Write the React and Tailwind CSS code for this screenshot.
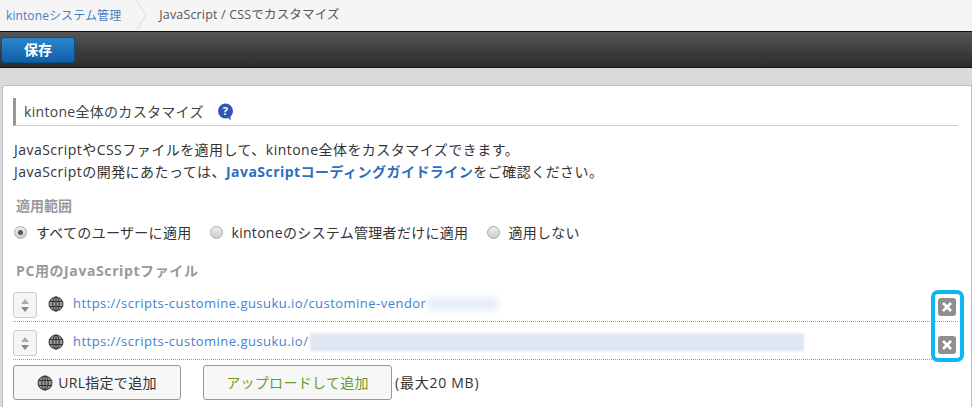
import React from "react";

const FONT = "font-['Open_Sans','Noto_Sans_CJK_JP',sans-serif]";

const Globe = ({ className = "" }) => (
  <svg viewBox="0 0 16 16" className={className} fill="none" stroke="#333" strokeWidth="1">
    <circle cx="8" cy="8" r="7" fill="#999" />
    <ellipse cx="8" cy="8" rx="3.2" ry="7" />
    <path d="M8 1v14M1.2 5.5h13.6M1.2 10.5h13.6" />
  </svg>
);

const Radio = ({ checked }) => (
  <span className="w-[13px] h-[13px] rounded-full border border-[#aaa] bg-gradient-to-b from-[#eee] to-[#ccc] flex items-center justify-center shrink-0">
    {checked && <span className="w-[5px] h-[5px] rounded-full bg-[#555]" />}
  </span>
);

const Sorter = () => (
  <div className="w-[24px] h-[26px] self-end mb-[3px] rounded-[3px] border border-[#ccc] bg-[#f5f5f5] flex flex-col items-center justify-center gap-[3px] shrink-0">
    <svg width="8" height="5" viewBox="0 0 8 5"><path d="M4 0l4 5H0z" fill="#aaa" /></svg>
    <svg width="8" height="5" viewBox="0 0 8 5"><path d="M4 5L0 0h8z" fill="#888" /></svg>
  </div>
);

const Remove = () => (
  <div className="w-[18px] h-[18px] rounded-[3px] bg-[#8f8f8f] flex items-center justify-center">
    <svg width="14" height="14" viewBox="0 0 14 14"><path d="M3 3l8 8M11 3l-8 8" stroke="#fff" strokeWidth="2.6" /></svg>
  </div>
);

const FileRow = ({ url, blurClass }) => (
  <div className="h-[38px] pt-[2px] border-b border-dotted border-[#999] flex items-center relative">
    <Sorter />
    <Globe className="w-4 h-4 ml-[11px]" />
    <span className="ml-[9px] text-[13px] text-[#3f82d0] tracking-[0.47px] whitespace-nowrap">{url}</span>
    <div className={blurClass} />
    <div className="absolute right-[2px] top-[14px]"><Remove /></div>
  </div>
);

export default function App() {
  return (
    <div className={`relative w-[972px] h-[407px] overflow-hidden bg-[#d9dadb] ${FONT} text-[14px] text-[#333]`}>
      {/* breadcrumb */}
      <div className="h-[31px] bg-[#f5f5f5] flex items-center">
        <a className="ml-[6px] text-[#4a80bd] text-[12px] tracking-[0.1px]">kintoneシステム管理</a>
        <svg width="10" height="31" viewBox="0 0 10 31" className="ml-[15px]" fill="none"><path d="M0.5 0l9 15.5L0.5 31" stroke="#ddd" /></svg>
        <span className="ml-[13px] text-[12.5px] tracking-[0.17px] text-[#555]">JavaScript / CSSでカスタマイズ</span>
      </div>

      {/* toolbar */}
      <div className="h-[37px] border-y border-[#111] bg-gradient-to-b from-[#555] to-[#2b2b2b] flex items-center pl-[1px]">
        <button className="w-[74px] h-[26px] rounded-[3px] border border-[#0d4f8b] bg-gradient-to-b from-[#2b86cc] to-[#0f5ea8] text-white font-bold text-[14px]">保存</button>
      </div>

      {/* panel */}
      <div className="mt-[17px] ml-[2px] h-[330px] bg-white border border-[#bbb] rounded-tl-[3px] pl-[10px] pr-[13px] pt-[12px]">
        <div className="h-[28px] border-l-[3px] border-b border-l-[#999] border-b-[#ccc] flex items-center pl-[8px] text-[14px] tracking-[0.3px] text-[#444]">
          kintone全体のカスタマイズ
          <svg width="17" height="18" viewBox="0 0 17 18" className="ml-[13px]">
            <circle cx="8.5" cy="8" r="7.5" fill="#2f56b5" />
            <path d="M10 14l4 3.5-1-5z" fill="#2f56b5" />
            <text x="8.5" y="12" textAnchor="middle" fontSize="11" fontWeight="bold" fill="#fff">?</text>
          </svg>
        </div>

        <div className="ml-[1px] tracking-[0.47px]">
          <p className="mt-[13px] leading-[22px]">JavaScriptやCSSファイルを適用して、kintone全体をカスタマイズできます。</p>
          <p className="leading-[22px]">
            JavaScriptの開発にあたっては、<span className="font-bold text-[#2a6fc0]">JavaScriptコーディングガイドライン</span>をご確認ください。
          </p>
        </div>

        <h3 className="mt-[12px] ml-[3px] font-bold text-[#999] text-[14px]">適用範囲</h3>
        <div className="mt-[6px] ml-[1px] flex items-center tracking-[0.3px]">
          <Radio checked />
          <span className="ml-[9px]">すべてのユーザーに適用</span>
          <span className="ml-[19px]"><Radio /></span>
          <span className="ml-[8px]">kintoneのシステム管理者だけに適用</span>
          <span className="ml-[19px]"><Radio /></span>
          <span className="ml-[8px]">適用しない</span>
        </div>

        <h3 className="mt-[17px] ml-[3px] font-bold text-[#999] text-[14px] tracking-[0.6px]">PC用のJavaScriptファイル</h3>

        <div className="mt-[3px]">
          <FileRow url="https://scripts-customine.gusuku.io/customine-vendor" blurClass="w-[70px] h-[12px] ml-[2px] bg-[#e3eaf5] blur-[4px]" />
          <FileRow url="https://scripts-customine.gusuku.io/" blurClass="w-[494px] h-[18px] ml-[2px] bg-[#e0e7f3] blur-[1px]" />
        </div>

        <div className="mt-[5px] flex items-center tracking-[0.3px]">
          <button className="w-[168px] h-[35px] rounded-[3px] border border-[#999] bg-[#f7f7f7] flex items-center justify-center gap-[5px]">
            <Globe className="w-4 h-4" />URL指定で追加
          </button>
          <button className="ml-[22px] w-[189px] h-[35px] rounded-[3px] border border-[#999] bg-[#f7f7f7] text-[#6a9a2a]">アップロードして追加</button>
          <span className="ml-[3px] tracking-[0.75px]">(最大20 MB)</span>
        </div>
      </div>

      {/* highlight around the remove buttons */}
      <div className="absolute left-[931px] top-[290px] w-[33px] h-[72px] rounded-[7px] border-[4px] border-[#0db7ef]" />
    </div>
  );
}
